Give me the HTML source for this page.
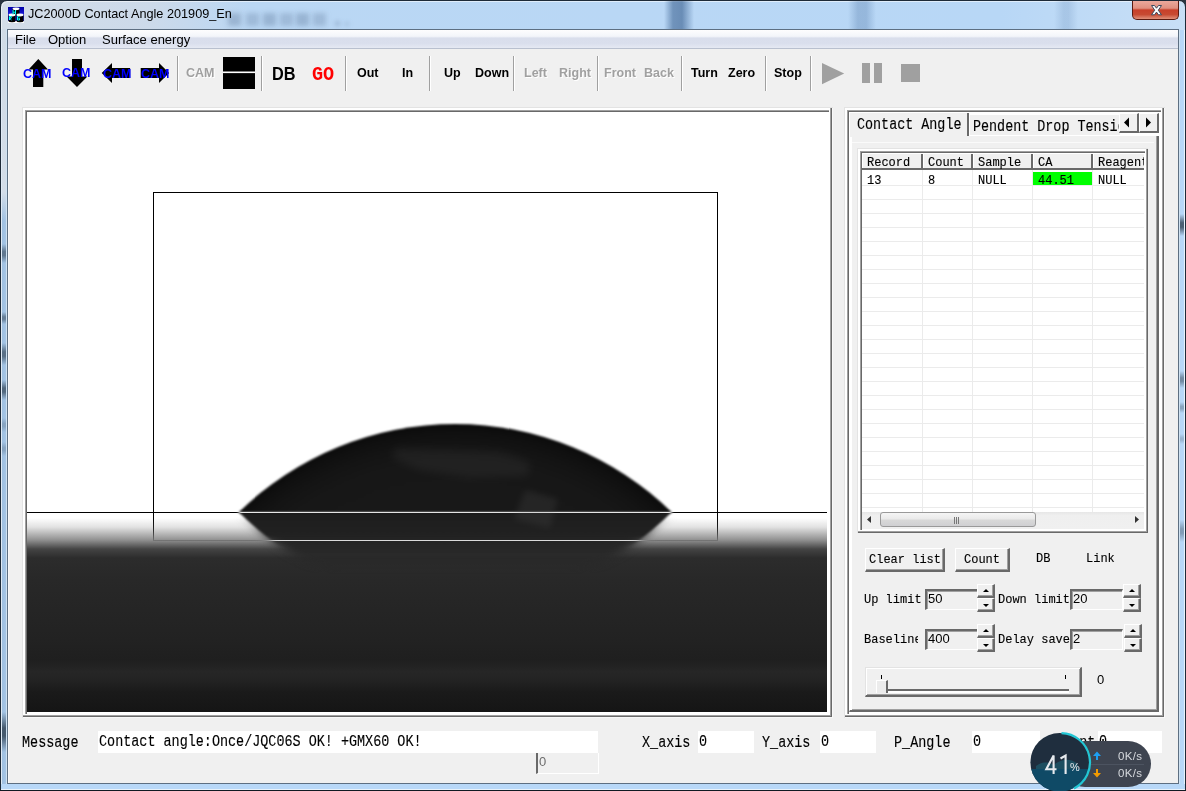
<!DOCTYPE html>
<html><head><meta charset="utf-8">
<style>
*{box-sizing:border-box;margin:0;padding:0}
html,body{width:1186px;height:791px;overflow:hidden;background:#2a3440}
.a{position:absolute}
.sans{font-family:"Liberation Sans",sans-serif}
.mono{font-family:"Liberation Mono",monospace;-webkit-text-stroke:0.12px #000}
.nw{white-space:nowrap}
#win{left:0;top:0;width:1186px;height:791px;background:linear-gradient(90deg,#d3dde8 0,#ccdaea 150px,#bad7f4 250px,#b8d7f6 1000px,#c8dff6 1186px);border:1px solid #1d2a38;border-radius:7px 7px 0 0;overflow:hidden;box-shadow:inset 1px 1px 0 rgba(255,255,255,.55)}
#client{left:7px;top:29px;width:1172px;height:755px;background:#f0f0f0;border:1px solid #5d6f82;box-shadow:inset 1px 0 0 #f8f8f8}
.tb{font:bold 12.5px "Liberation Sans",sans-serif;color:#000;top:66px;line-height:14px}
.tbd{color:#a0a0a0;text-shadow:1px 1px 0 #fff}
.sep{top:56px;width:2px;height:35px;border-left:1px solid #a0a0a0;border-right:1px solid #fff}
.frame{background:#fff;border:1px solid #e3e3e3;border-right-color:#f4f4f4;border-bottom-color:#f4f4f4}
.dk{border:2px solid #696969}
.edit{background:#f0f0f0;border-left:2px solid #696969;border-top:2px solid #696969;border-right:1px solid #fff;border-bottom:1px solid #fff;box-shadow:inset 1px 1px 0 #a0a0a0}
.etx{font-size:13px;line-height:15px;color:#000}
.spn{width:18px;height:28px}
.su,.sd{position:absolute;left:0;width:18px;height:14px;background:#f0f0f0;border-left:1px solid #fff;border-top:1px solid #fff;border-right:2px solid #696969;border-bottom:2px solid #696969;box-shadow:inset -1px -1px 0 #a0a0a0}
.su{top:0}.sd{top:14px}
.su:after,.sd:after{content:"";position:absolute;left:5px;width:0;height:0;border-left:3px solid transparent;border-right:3px solid transparent}
.su:after{top:4px;border-bottom:3px solid #000}
.sd:after{top:5px;border-top:3px solid #000}
.big{font-size:13.45px;line-height:16px;transform:scaleY(1.2);transform-origin:0 0;color:#000}
</style></head><body>
<div id="win" class="a"></div>
  <!-- title bar blurred bg -->
  <div class="a" style="left:228px;top:13px;width:13px;height:13px;background:rgba(80,105,140,0.32);filter:blur(2.5px)"></div>
  <div class="a" style="left:246px;top:13px;width:13px;height:13px;background:rgba(80,105,140,0.26);filter:blur(2.5px)"></div>
  <div class="a" style="left:263px;top:13px;width:13px;height:13px;background:rgba(80,105,140,0.32);filter:blur(2.5px)"></div>
  <div class="a" style="left:280px;top:13px;width:13px;height:13px;background:rgba(80,105,140,0.26);filter:blur(2.5px)"></div>
  <div class="a" style="left:296px;top:13px;width:13px;height:13px;background:rgba(80,105,140,0.32);filter:blur(2.5px)"></div>
  <div class="a" style="left:313px;top:13px;width:13px;height:13px;background:rgba(80,105,140,0.26);filter:blur(2.5px)"></div>
  <div class="a" style="left:335px;top:21px;width:5px;height:5px;background:rgba(80,105,140,.25);filter:blur(2px)"></div>
  <div class="a" style="left:345px;top:22px;width:4px;height:4px;background:rgba(80,105,140,.2);filter:blur(2px)"></div>
  <div class="a" style="left:664px;top:1px;width:30px;height:28px;background:linear-gradient(90deg,rgba(40,80,130,0),rgba(40,80,130,.5) 30%,rgba(40,80,130,.55) 60%,rgba(40,80,130,0))"></div>
  <div class="a" style="left:848px;top:1px;width:28px;height:28px;background:linear-gradient(90deg,rgba(70,110,160,0),rgba(70,110,160,.3) 35%,rgba(70,110,160,.3) 65%,rgba(70,110,160,0))"></div>
  <div class="a" style="left:1054px;top:1px;width:24px;height:28px;background:linear-gradient(90deg,rgba(70,110,160,0),rgba(70,110,160,.18) 40%,rgba(70,110,160,.18) 60%,rgba(70,110,160,0))"></div>
  <!-- icon -->
  <svg class="a" style="left:8px;top:7px" width="16" height="16" viewBox="0 0 16 16">
    <defs><linearGradient id="ig" x1="0" y1="0" x2="0" y2="1"><stop offset="0" stop-color="#0000a8"/><stop offset="1" stop-color="#3030ff"/></linearGradient></defs>
    <rect x="0" y="0" width="16" height="16" fill="#fff"/>
    <rect x="0" y="0" width="16" height="14" fill="url(#ig)"/>
    <rect x="4.5" y="1.5" width="7" height="7" fill="#000"/><ellipse cx="8" cy="1.8" rx="3.5" ry="1.4" fill="#fff"/>
    <rect x="0.5" y="7.5" width="7" height="6.5" fill="#000"/><ellipse cx="4" cy="8" rx="3.5" ry="1.4" fill="#fff"/><ellipse cx="4" cy="14" rx="3.5" ry="1.2" fill="#000"/>
    <rect x="8.5" y="7.5" width="7" height="6.5" fill="#000"/><ellipse cx="12" cy="8" rx="3.5" ry="1.4" fill="#fff"/><ellipse cx="12" cy="14" rx="3.5" ry="1.2" fill="#000"/>
    <path d="M5 3 L5 7.5 M7.5 3 L7.5 7.5 M5 5.2 L7.5 5.2" stroke="#00ffff" stroke-width="1"/>
    <path d="M1.5 13 L1.5 9.5 L3.2 9.5 L3.2 11.2 L1.5 11.2 L3.5 13" stroke="#00ffff" stroke-width="1" fill="none"/>
    <path d="M11.5 10 L9.5 9.5 L9.5 13 L11.5 13 L11.5 11.5 L10.5 11.5" stroke="#00ffff" stroke-width="1" fill="none"/>
  </svg>
  <div class="a sans nw" style="left:28px;top:6px;font-size:12.7px;line-height:16px;color:#000">JC2000D Contact Angle 201909_En</div>
  <!-- close button -->
  <div class="a" style="left:1132px;top:1px;width:47px;height:19px;border:1px solid #5a1a10;border-top:none;border-radius:0 0 5px 5px;background:linear-gradient(#eba89c 0%,#e09080 40%,#c8402a 50%,#c74a32 75%,#e0907a 100%)"></div>
  <svg class="a" style="left:1144px;top:3px" width="24" height="14" viewBox="0 0 24 14">
    <path d="M7.5 2.5 L10.5 2.5 L12.5 5.2 L14.5 2.5 L17.5 2.5 L14.3 7.2 L17.5 11.8 L14.5 11.8 L12.5 9.1 L10.5 11.8 L7.5 11.8 L10.7 7.2Z" fill="#fff" stroke="#3c4a5e" stroke-width="1"/>
  </svg>

<div class="a" style="left:1px;top:29px;width:6px;height:761px;background:linear-gradient(90deg,#dfeaf5 0,#dfeaf5 1px,#9ebfe0 1px,#a6c6e6 5px,#cfe2f2 5px)"></div>
<div class="a" style="left:2px;top:29px;width:4px;height:192px;background:linear-gradient(#d0dbe6 0,#d3dde8 85%,rgba(211,221,232,0))"></div>
<div class="a" style="left:1179px;top:30px;width:6px;height:760px;background:linear-gradient(90deg,#cfe2f2 0,#cfe2f2 1px,#b6d6f6 1px,#b8d8f8 5px,#e6f2fb 5px)"></div>
<div class="a" style="left:1px;top:784px;width:1184px;height:6px;background:linear-gradient(#b8d8f8 0,#b8d8f8 5px,#e8f2fb 5px)"></div>
<div class="a" style="left:0;top:790px;width:1186px;height:1px;background:#111a22"></div>
<div class="a" style="left:2px;top:244px;width:4px;height:19px;background:linear-gradient(rgba(30,45,60,0),rgba(30,45,60,0.5) 40%,rgba(30,45,60,0.5) 60%,rgba(30,45,60,0))"></div>
<div class="a" style="left:2px;top:312px;width:4px;height:12px;background:linear-gradient(rgba(30,45,60,0),rgba(30,45,60,0.45) 40%,rgba(30,45,60,0.45) 60%,rgba(30,45,60,0))"></div>
<div class="a" style="left:2px;top:343px;width:4px;height:22px;background:linear-gradient(rgba(30,45,60,0),rgba(30,45,60,0.55) 40%,rgba(30,45,60,0.55) 60%,rgba(30,45,60,0))"></div>
<div class="a" style="left:2px;top:380px;width:4px;height:20px;background:linear-gradient(rgba(30,45,60,0),rgba(30,45,60,0.6) 40%,rgba(30,45,60,0.6) 60%,rgba(30,45,60,0))"></div>
<div class="a" style="left:2px;top:418px;width:4px;height:14px;background:linear-gradient(rgba(30,45,60,0),rgba(30,45,60,0.2) 40%,rgba(30,45,60,0.2) 60%,rgba(30,45,60,0))"></div>
<div class="a" style="left:2px;top:442px;width:4px;height:14px;background:linear-gradient(rgba(30,45,60,0),rgba(30,45,60,0.2) 40%,rgba(30,45,60,0.2) 60%,rgba(30,45,60,0))"></div>
<div class="a" style="left:2px;top:712px;width:4px;height:40px;background:linear-gradient(rgba(30,45,60,0),rgba(30,45,60,0.7) 40%,rgba(30,45,60,0.7) 60%,rgba(30,45,60,0))"></div>
<div class="a" style="left:1180px;top:214px;width:4px;height:22px;background:linear-gradient(rgba(30,45,60,0),rgba(30,45,60,0.7) 40%,rgba(30,45,60,0.7) 60%,rgba(30,45,60,0))"></div>
<div class="a" style="left:1180px;top:371px;width:4px;height:17px;background:linear-gradient(rgba(30,45,60,0),rgba(30,45,60,0.45) 40%,rgba(30,45,60,0.45) 60%,rgba(30,45,60,0))"></div>
<div class="a" style="left:1180px;top:402px;width:4px;height:11px;background:linear-gradient(rgba(30,45,60,0),rgba(30,45,60,0.3) 40%,rgba(30,45,60,0.3) 60%,rgba(30,45,60,0))"></div>
<div class="a" style="left:1180px;top:434px;width:4px;height:10px;background:linear-gradient(rgba(30,45,60,0),rgba(30,45,60,0.2) 40%,rgba(30,45,60,0.2) 60%,rgba(30,45,60,0))"></div>
<div class="a" style="left:1180px;top:520px;width:4px;height:22px;background:linear-gradient(rgba(30,45,60,0),rgba(30,45,60,0.35) 40%,rgba(30,45,60,0.35) 60%,rgba(30,45,60,0))"></div>
<div id="client" class="a"></div>
<!-- menu bar -->
<div class="a" style="left:8px;top:30px;width:1170px;height:19px;background:linear-gradient(#fdfdfe 0%,#f3f5fa 35%,#d9deec 45%,#dadfed 75%,#e5e9f3 100%);border-bottom:1px solid #b9c0cf"></div>
<div class="a sans nw" style="left:15px;top:32px;font-size:13px;line-height:16px;color:#000">File</div>
<div class="a sans nw" style="left:48px;top:32px;font-size:13px;line-height:16px;color:#000">Option</div>
<div class="a sans nw" style="left:102px;top:32px;font-size:13px;line-height:16px;color:#000">Surface energy</div>

<!-- toolbar arrows -->
<svg class="a" style="left:0;top:50px" width="940" height="45" viewBox="0 50 940 45">
  <!-- up -->
  <path d="M38.3 59 L48 69.4 L43.3 69.4 L43.3 87 L33 87 L33 69.4 L28.6 69.4Z" fill="#000"/>
  <!-- down -->
  <path d="M72 59 L82 59 L82 76.5 L87.4 76.5 L77 87 L66.6 76.5 L72 76.5Z" fill="#000"/>
  <!-- left -->
  <path d="M101.7 73 L112 63 L112 68 L130.1 68 L130.1 78 L112 78 L112 83Z" fill="#000"/>
  <!-- right -->
  <path d="M140.7 68 L159 68 L159 63 L169.1 73 L159 83 L159 78 L140.7 78Z" fill="#000"/>
  <!-- black box -->
  <rect x="223" y="57" width="32" height="32" fill="#000"/>
  <rect x="223" y="71.5" width="32" height="1.6" fill="#fff"/>
  <!-- play pause stop -->
  <path d="M822 63 L844.2 73.6 L822 84.2Z" fill="#a0a0a0"/>
  <rect x="862" y="63" width="8" height="20" fill="#a0a0a0"/>
  <rect x="874" y="63" width="8" height="20" fill="#a0a0a0"/>
  <rect x="901" y="64" width="19" height="18" fill="#a0a0a0"/>
</svg>
<div class="a tb nw" style="left:23px;top:67px;color:#0000ff">CAM</div>
<div class="a tb nw" style="left:62px;top:66px;color:#0000ff">CAM</div>
<div class="a tb nw" style="left:103px;top:67px;color:#0000ff">CAM</div>
<div class="a tb nw" style="left:141px;top:67px;color:#0000ff">CAM</div>
<div class="a sep" style="left:177px"></div>
<div class="a tb tbd nw" style="left:186px;top:66px">CAM</div>
<div class="a sep" style="left:261px"></div>
<div class="a nw sans" style="left:272px;top:63px;font:bold 16.3px 'Liberation Sans';line-height:18px;color:#000;transform:scaleY(1.1);transform-origin:0 0">DB</div>
<div class="a nw" style="left:312px;top:66px;font:bold 18.5px 'Liberation Mono';line-height:18px;color:#f00;transform:scaleY(1.08);transform-origin:0 0">GO</div>
<div class="a sep" style="left:345px"></div>
<div class="a tb nw" style="left:357px">Out</div>
<div class="a tb nw" style="left:402px">In</div>
<div class="a sep" style="left:429px"></div>
<div class="a tb nw" style="left:444px">Up</div>
<div class="a tb nw" style="left:475px">Down</div>
<div class="a sep" style="left:513px"></div>
<div class="a tb tbd nw" style="left:524px">Left</div>
<div class="a tb tbd nw" style="left:559px">Right</div>
<div class="a sep" style="left:597px"></div>
<div class="a tb tbd nw" style="left:604px">Front</div>
<div class="a tb tbd nw" style="left:644px">Back</div>
<div class="a sep" style="left:681px"></div>
<div class="a tb nw" style="left:691px">Turn</div>
<div class="a tb nw" style="left:728px">Zero</div>
<div class="a sep" style="left:765px"></div>
<div class="a tb nw" style="left:774px">Stop</div>
<div class="a sep" style="left:810px"></div>

<!-- image frame -->
<div class="a" style="left:22px;top:107px;width:811px;height:611px;background:#f8f8f8;border-left:1px solid #e3e3e3;border-top:1px solid #e3e3e3"></div>
<div class="a" style="left:23px;top:108px;width:809px;height:609px;background:#696969"></div>
<div class="a" style="left:23px;top:108px;width:808px;height:608px;background:#a0a0a0"></div>
<div class="a" style="left:23px;top:108px;width:807px;height:607px;background:#fff"></div>
<div class="a" style="left:25px;top:110px;width:804px;height:604px;border-left:1px solid #a0a0a0;border-top:1px solid #a0a0a0;box-shadow:inset 1px 1px 0 #696969;background:#fff"></div>
<svg class="a" style="left:27px;top:112px" width="800" height="600" viewBox="27 112 800 600">
  <defs>
    <linearGradient id="sub" x1="0" y1="512" x2="0" y2="712" gradientUnits="userSpaceOnUse">
      <stop offset="0" stop-color="#fff"/>
      <stop offset="0.03" stop-color="#fff"/>
      <stop offset="0.075" stop-color="#e2e2e2"/>
      <stop offset="0.14" stop-color="#909090"/>
      <stop offset="0.185" stop-color="#444"/>
      <stop offset="0.23" stop-color="#2c2c2c"/>
      <stop offset="0.34" stop-color="#282828"/>
      <stop offset="0.64" stop-color="#222"/>
      <stop offset="0.74" stop-color="#1f1f1f"/>
      <stop offset="0.8" stop-color="#262626"/>
      <stop offset="0.84" stop-color="#232323"/>
      <stop offset="0.9" stop-color="#1a1a1a"/>
      <stop offset="1" stop-color="#151515"/>
    </linearGradient>
    <linearGradient id="refg" x1="0" y1="512" x2="0" y2="580" gradientUnits="userSpaceOnUse">
      <stop offset="0" stop-color="#1d1d1d"/>
      <stop offset="0.4" stop-color="#222"/>
      <stop offset="1" stop-color="#282828"/>
    </linearGradient>
    <filter color-interpolation-filters="sRGB" id="bl1" x="-10%" y="-10%" width="120%" height="120%"><feGaussianBlur stdDeviation="0.8"/></filter>
    <filter color-interpolation-filters="sRGB" id="bl2" x="-10%" y="-10%" width="120%" height="120%"><feGaussianBlur stdDeviation="2"/></filter>
    <filter color-interpolation-filters="sRGB" id="bl4" x="-20%" y="-50%" width="140%" height="200%"><feGaussianBlur stdDeviation="4"/></filter>
    <filter color-interpolation-filters="sRGB" id="bl6" x="-20%" y="-50%" width="140%" height="200%"><feGaussianBlur stdDeviation="6"/></filter>
    <filter color-interpolation-filters="sRGB" id="bl3" x="-20%" y="-50%" width="140%" height="200%"><feGaussianBlur stdDeviation="3"/></filter>
    <radialGradient id="dropg" cx="455.25" cy="733.2" r="309.7" gradientUnits="userSpaceOnUse">
      <stop offset="0" stop-color="#1a1a1a"/>
      <stop offset="0.8" stop-color="#181818"/>
      <stop offset="0.88" stop-color="#171717"/>
      <stop offset="0.93" stop-color="#141414"/>
      <stop offset="0.97" stop-color="#101010"/>
      <stop offset="1" stop-color="#0b0b0b"/>
    </radialGradient>
    <linearGradient id="gs" x1="0" y1="512" x2="0" y2="600" gradientUnits="userSpaceOnUse">
      <stop offset="0" stop-color="#fff"/><stop offset="0.26" stop-color="#fff"/><stop offset="0.42" stop-color="#000"/><stop offset="1" stop-color="#000"/>
    </linearGradient>
    <linearGradient id="gb" x1="0" y1="512" x2="0" y2="600" gradientUnits="userSpaceOnUse">
      <stop offset="0" stop-color="#000"/><stop offset="0.05" stop-color="#000"/><stop offset="0.28" stop-color="#fff"/><stop offset="0.45" stop-color="#fff"/><stop offset="0.7" stop-color="#000"/><stop offset="1" stop-color="#000"/>
    </linearGradient>
    <mask id="msharp" maskUnits="userSpaceOnUse" x="27" y="512" width="800" height="200"><rect x="27" y="512" width="800" height="100" fill="url(#gs)"/></mask>
    <mask id="mblur" maskUnits="userSpaceOnUse" x="27" y="512" width="800" height="200"><rect x="27" y="512" width="800" height="100" fill="url(#gb)"/></mask>
  </defs>
  <rect x="27" y="112" width="800" height="600" fill="#fff"/>
  <rect x="27" y="512" width="800" height="200" fill="url(#sub)"/>
  <!-- reflection -->
  <g mask="url(#mblur)"><circle cx="455.25" cy="290.8" r="309.7" fill="#282828" filter="url(#bl4)"/></g>
  <g mask="url(#msharp)"><circle cx="455.25" cy="290.8" r="309.7" fill="url(#refg)" filter="url(#bl1)"/></g>
  <!-- cap -->
  <clipPath id="capc"><path d="M238.5 512.5 A309.7 309.7 0 0 1 672 512.5Z"/></clipPath>
  <path d="M238.5 512.5 A309.7 309.7 0 0 1 672 512.5Z" fill="url(#dropg)" filter="url(#bl1)"/>
  <g filter="url(#bl4)" opacity="0.3">
    <path d="M395 448 L500 452 L530 462 L528 476 L470 478 L420 470 L392 458Z" fill="#3a3a3a"/>
  </g>
  <g filter="url(#bl3)" opacity="0.3">
    <path d="M525 490 L558 499 L550 528 L514 519Z" fill="#444"/>
  </g>
  <!-- xor lines -->
  <g style="mix-blend-mode:difference" fill="#fff">
    <rect x="27" y="512" width="800" height="1"/>
    <rect x="153" y="192" width="565" height="1"/>
    <rect x="153" y="540" width="565" height="1"/>
    <rect x="153" y="193" width="1" height="347"/>
    <rect x="717" y="193" width="1" height="347"/>
  </g>
</svg>

<!-- right group frame -->
<div class="a" style="left:844px;top:107px;width:321px;height:611px;background:#f8f8f8;border-left:1px solid #e3e3e3;border-top:1px solid #e3e3e3"></div>
<div class="a" style="left:845px;top:108px;width:319px;height:609px;background:#696969"></div>
<div class="a" style="left:845px;top:108px;width:318px;height:608px;background:#a0a0a0"></div>
<div class="a" style="left:845px;top:108px;width:317px;height:607px;background:#fff"></div>
<div class="a" style="left:847px;top:110px;width:314px;height:604px;border-left:1px solid #a0a0a0;border-top:1px solid #a0a0a0;box-shadow:inset 1px 1px 0 #696969;background:#fff"></div>
<!-- tab page -->
<div class="a" style="left:849px;top:135px;width:310px;height:577px;background:#f0f0f0;border-left:1px solid #fff;border-top:1px solid #fff;border-right:2px solid #696969;border-bottom:2px solid #696969;box-shadow:inset -1px -1px 0 #a0a0a0"></div>
<div class="a" style="left:850px;top:136px;width:2px;height:574px;background:#fff"></div>
<!-- selected tab -->
<div class="a" style="left:849px;top:112px;width:119px;height:25px;background:#f0f0f0;border-left:1px solid #fff;border-top:1px solid #fff"></div>
<div class="a" style="left:967px;top:113px;width:2px;height:23px;background:#696969"></div>
<div class="a mono nw" style="left:857px;top:116px;font-size:13.4px;line-height:16px;transform:scaleY(1.2);transform-origin:0 0;color:#000">Contact Angle</div>
<!-- other tab -->
<div class="a" style="left:969px;top:114px;width:151px;height:22px;background:#f0f0f0;border-left:1px solid #fff;border-top:1px solid #fff;overflow:hidden">
  <div class="a mono nw" style="left:3px;top:3px;font-size:13.4px;line-height:16px;transform:scaleY(1.2);transform-origin:0 0;color:#000">Pendent Drop Tension</div>
</div>
<div class="a" style="left:969px;top:135px;width:190px;height:1px;background:#fff"></div>
<!-- scroll btns -->
<div class="a" style="left:1119px;top:113px;width:20px;height:20px;background:#f0f0f0;border-left:1px solid #fff;border-top:1px solid #fff;border-right:2px solid #696969;border-bottom:2px solid #696969"></div>
<div class="a" style="left:1139px;top:113px;width:20px;height:20px;background:#f0f0f0;border-left:1px solid #fff;border-top:1px solid #fff;border-right:2px solid #696969;border-bottom:2px solid #696969"></div>
<svg class="a" style="left:1119px;top:113px" width="40" height="20" viewBox="0 0 40 20">
  <path d="M5 9.5 L10 4.5 L10 14.5Z" fill="#000"/>
  <path d="M27 4.5 L32 9.5 L27 14.5Z" fill="#000"/>
</svg>
<!-- inner frame highlight line -->
<div class="a" style="left:852px;top:142px;width:302px;height:1px;background:#fafafa"></div>
<!-- grid frame -->
<div class="a" style="left:857px;top:148px;width:291px;height:385px;background:#696969;border-left:1px solid #e3e3e3;border-top:1px solid #e3e3e3"></div>
<div class="a" style="left:858px;top:149px;width:290px;height:384px;background:#696969"></div>
<div class="a" style="left:858px;top:149px;width:289px;height:383px;background:#a0a0a0"></div>
<div class="a" style="left:858px;top:149px;width:288px;height:382px;background:#fff"></div>
<div class="a" style="left:860px;top:151px;width:285px;height:379px;border-left:1px solid #a0a0a0;border-top:1px solid #a0a0a0;box-shadow:inset 1px 1px 0 #696969;background:#fff"></div>
<!-- grid content -->
<div class="a" style="left:862px;top:153px;width:282px;height:359px;overflow:hidden;background:#fff">
  <svg class="a" style="left:0;top:0" width="282" height="359" viewBox="862 153 282 359">
    <g fill="#ebebeb">
      <rect x="862" y="185" width="282" height="1"/><rect x="862" y="199" width="282" height="1"/><rect x="862" y="213" width="282" height="1"/><rect x="862" y="227" width="282" height="1"/><rect x="862" y="241" width="282" height="1"/><rect x="862" y="255" width="282" height="1"/><rect x="862" y="269" width="282" height="1"/><rect x="862" y="283" width="282" height="1"/><rect x="862" y="297" width="282" height="1"/><rect x="862" y="311" width="282" height="1"/><rect x="862" y="325" width="282" height="1"/><rect x="862" y="339" width="282" height="1"/><rect x="862" y="353" width="282" height="1"/><rect x="862" y="367" width="282" height="1"/><rect x="862" y="381" width="282" height="1"/><rect x="862" y="395" width="282" height="1"/><rect x="862" y="409" width="282" height="1"/><rect x="862" y="423" width="282" height="1"/><rect x="862" y="437" width="282" height="1"/><rect x="862" y="451" width="282" height="1"/><rect x="862" y="465" width="282" height="1"/><rect x="862" y="479" width="282" height="1"/><rect x="862" y="493" width="282" height="1"/><rect x="862" y="507" width="282" height="1"/>
      <rect x="922" y="170" width="1" height="342"/><rect x="972" y="170" width="1" height="342"/><rect x="1032" y="170" width="1" height="342"/><rect x="1092" y="170" width="1" height="342"/>
    </g>
    <!-- header -->
    <rect x="862" y="153" width="282" height="17" fill="#f0f0f0"/>
    <g fill="#696969">
      <rect x="862" y="168" width="282" height="2"/>
      <rect x="921" y="153" width="2" height="17"/><rect x="971" y="153" width="2" height="17"/><rect x="1031" y="153" width="2" height="17"/><rect x="1091" y="153" width="2" height="17"/>
    </g>
    <g fill="#fff">
      <rect x="862" y="153" width="282" height="1"/>
      <rect x="862" y="153" width="1" height="15"/><rect x="923" y="153" width="1" height="15"/><rect x="973" y="153" width="1" height="15"/><rect x="1033" y="153" width="1" height="15"/><rect x="1093" y="153" width="1" height="15"/>
    </g>
    <rect x="1033" y="172" width="59" height="13" fill="#00ff00"/>
  </svg>
  <div class="a mono nw" style="left:5px;top:2px;font-size:12px;line-height:14px;transform:scaleY(1.12);transform-origin:0 0;color:#000">Record</div>
  <div class="a mono nw" style="left:66px;top:2px;font-size:12px;line-height:14px;transform:scaleY(1.12);transform-origin:0 0;color:#000">Count</div>
  <div class="a mono nw" style="left:116px;top:2px;font-size:12px;line-height:14px;transform:scaleY(1.12);transform-origin:0 0;color:#000">Sample</div>
  <div class="a mono nw" style="left:176px;top:2px;font-size:12px;line-height:14px;transform:scaleY(1.12);transform-origin:0 0;color:#000">CA</div>
  <div class="a mono nw" style="left:236px;top:2px;font-size:12px;line-height:14px;transform:scaleY(1.12);transform-origin:0 0;color:#000">Reagent</div>
  <div class="a mono nw" style="left:5px;top:20px;font-size:12px;line-height:14px;transform:scaleY(1.12);transform-origin:0 0;color:#000">13</div>
  <div class="a mono nw" style="left:66px;top:20px;font-size:12px;line-height:14px;transform:scaleY(1.12);transform-origin:0 0;color:#000">8</div>
  <div class="a mono nw" style="left:116px;top:20px;font-size:12px;line-height:14px;transform:scaleY(1.12);transform-origin:0 0;color:#000">NULL</div>
  <div class="a mono nw" style="left:176px;top:20px;font-size:12px;line-height:14px;transform:scaleY(1.12);transform-origin:0 0;color:#000">44.51</div>
  <div class="a mono nw" style="left:236px;top:20px;font-size:12px;line-height:14px;transform:scaleY(1.12);transform-origin:0 0;color:#000">NULL</div>
</div>
<!-- h scrollbar -->
<div class="a" style="left:862px;top:512px;width:282px;height:17px;background:linear-gradient(#e6e6e6,#efefef 20%,#f0f0f0)"></div>
<div class="a" style="left:880px;top:512px;width:156px;height:15px;border:1px solid #999;border-radius:3px;background:linear-gradient(#f5f5f5 0%,#eaeaea 45%,#d8d8d8 55%,#cfcfd2 100%)"></div>
<svg class="a" style="left:862px;top:512px" width="282" height="17" viewBox="0 0 282 17">
  <path d="M5 7.5 L9 4 L9 11Z" fill="#333"/>
  <path d="M273 4 L277 7.5 L273 11Z" fill="#333"/>
  <g fill="#777"><rect x="92" y="5" width="1" height="7"/><rect x="94" y="5" width="1" height="7"/><rect x="96" y="5" width="1" height="7"/></g>
</svg>
<div class="a" style="left:862px;top:529px;width:284px;height:2px;background:#fff"></div>
<div class="a" style="left:1144px;top:153px;width:2px;height:378px;background:#fff"></div>

<!-- buttons -->
<div class="a" style="left:865px;top:548px;width:80px;height:24px;background:#f0f0f0;border-left:1px solid #fff;border-top:1px solid #fff;border-right:2px solid #696969;border-bottom:2px solid #696969;box-shadow:inset -1px -1px 0 #a0a0a0"></div>
<div class="a mono nw" style="left:869px;top:552px;font-size:12px;line-height:14px;transform:scaleY(1.12);transform-origin:0 0">Clear list</div>
<div class="a" style="left:955px;top:548px;width:55px;height:24px;background:#f0f0f0;border-left:1px solid #fff;border-top:1px solid #fff;border-right:2px solid #696969;border-bottom:2px solid #696969;box-shadow:inset -1px -1px 0 #a0a0a0"></div>
<div class="a mono nw" style="left:964px;top:552px;font-size:12px;line-height:14px;transform:scaleY(1.12);transform-origin:0 0">Count</div>
<div class="a mono nw" style="left:1036px;top:551px;font-size:12px;line-height:14px;transform:scaleY(1.12);transform-origin:0 0">DB</div>
<div class="a mono nw" style="left:1086px;top:551px;font-size:12px;line-height:14px;transform:scaleY(1.12);transform-origin:0 0">Link</div>
<!-- limits -->
<div class="a mono nw" style="left:864px;top:592px;font-size:12px;line-height:14px;transform:scaleY(1.12);transform-origin:0 0">Up limit</div>
<div class="a mono nw" style="left:998px;top:592px;font-size:12px;line-height:14px;transform:scaleY(1.12);transform-origin:0 0">Down limit</div>
<div class="a" style="left:864px;top:632px;width:54px;height:16px;overflow:hidden"><div class="a mono nw" style="left:0;top:0;font-size:12px;line-height:14px;transform:scaleY(1.12);transform-origin:0 0">Baseline</div></div>
<div class="a mono nw" style="left:998px;top:632px;font-size:12px;line-height:14px;transform:scaleY(1.12);transform-origin:0 0">Delay save</div>
<!-- edits -->
<div class="a edit" style="left:925px;top:589px;width:53px;height:21px"></div>
<div class="a edit" style="left:1070px;top:589px;width:53px;height:21px"></div>
<div class="a edit" style="left:925px;top:629px;width:53px;height:21px"></div>
<div class="a edit" style="left:1070px;top:629px;width:53px;height:21px"></div>
<div class="a sans nw etx" style="left:928px;top:591px">50</div>
<div class="a sans nw etx" style="left:1073px;top:591px">20</div>
<div class="a sans nw etx" style="left:928px;top:631px">400</div>
<div class="a sans nw etx" style="left:1073px;top:631px">2</div>
<!-- spinners -->
<div class="a spn" style="left:977px;top:584px"><div class="su"></div><div class="sd"></div></div>
<div class="a spn" style="left:1123px;top:584px"><div class="su"></div><div class="sd"></div></div>
<div class="a spn" style="left:977px;top:624px"><div class="su"></div><div class="sd"></div></div>
<div class="a spn" style="left:1124px;top:624px"><div class="su"></div><div class="sd"></div></div>
<!-- slider -->
<div class="a" style="left:865px;top:667px;width:217px;height:30px;background:#f0f0f0;border:1px solid #e3e3e3;border-right:2px solid #696969;border-bottom:2px solid #696969;box-shadow:inset 1px 1px 0 #fff, inset -1px -1px 0 #a0a0a0"></div>
<div class="a" style="left:881px;top:675px;width:1px;height:4px;background:#000"></div>
<div class="a" style="left:1065px;top:675px;width:1px;height:4px;background:#000"></div>
<div class="a" style="left:887px;top:689px;width:182px;height:2px;background:#696969"></div>
<div class="a" style="left:887px;top:691px;width:182px;height:2px;background:#fff"></div>
<div class="a" style="left:876px;top:680px;width:12px;height:13px;background:#ececec;border-left:1px solid #fff;border-top:1px solid #fff;border-right:2px solid #696969"></div>
<div class="a sans nw" style="left:1097px;top:673px;font-size:13px;line-height:14px">0</div>

<!-- status bar -->
<div class="a mono nw big" style="left:22px;top:734px">Message</div>
<div class="a" style="left:98px;top:731px;width:500px;height:22px;background:#fff"></div>
<div class="a mono nw big" style="left:99px;top:733px">Contact angle:Once/JQC06S OK! +GMX60 OK!</div>
<div class="a" style="left:536px;top:753px;width:63px;height:21px;background:#f0f0f0;border-left:2px solid #696969;border-right:1px solid #fff;border-bottom:1px solid #fff"></div>
<div class="a sans nw" style="left:539px;top:755px;font-size:13px;line-height:14px;color:#6d6d6d">0</div>
<div class="a mono nw big" style="left:642px;top:734px">X_axis</div>
<div class="a" style="left:698px;top:731px;width:56px;height:22px;background:#fff"></div>
<div class="a mono nw big" style="left:699px;top:733px">0</div>
<div class="a mono nw big" style="left:762px;top:734px">Y_axis</div>
<div class="a" style="left:820px;top:731px;width:56px;height:22px;background:#fff"></div>
<div class="a mono nw big" style="left:821px;top:733px">0</div>
<div class="a mono nw big" style="left:894px;top:734px">P_Angle</div>
<div class="a" style="left:972px;top:731px;width:68px;height:22px;background:#fff"></div>
<div class="a mono nw big" style="left:973px;top:733px">0</div>
<div class="a mono nw big" style="left:1055px;top:734px">Count</div>
<div class="a" style="left:1098px;top:731px;width:64px;height:22px;background:#fff"></div>
<div class="a mono nw big" style="left:1099px;top:733px">0</div>

<!-- floating ball -->
<div class="a" style="left:1062px;top:741px;width:89px;height:46px;border-radius:23px;background:#3e4450"></div>
<div class="a" style="left:1090px;top:764px;width:54px;height:1px;background:#4c5360"></div>
<svg class="a" style="left:1028px;top:731px" width="64" height="60" viewBox="0 0 64 60">
  <defs><clipPath id="cc"><circle cx="31.7" cy="31.3" r="29.3"/></clipPath></defs>
  <circle cx="31.7" cy="31.3" r="29.3" fill="#1f2e3e"/>
  <g clip-path="url(#cc)">
    <path d="M0 38 L64 38 L64 64 L0 64Z" fill="#0f4a66"/>
    <path d="M8 35 C14 30 22 31 26 34 C32 28 44 26 50 34 L50 38 L8 38Z" fill="#1d4e60"/>
  </g>
  <path d="M33.5 2.1 A29.3 29.3 0 0 1 46 57.5" fill="none" stroke="#22c6d4" stroke-width="2.2"/>
</svg>
<svg class="a" style="left:1040px;top:750px" width="32" height="30" viewBox="1040 750 32 30">
  <path d="M1053.6 774 L1053.6 755.5 L1046.3 769.2 L1056.5 769.2" stroke="#e6eaee" stroke-width="2.1" fill="none" stroke-linejoin="miter"/>
  <path d="M1060.5 758.5 L1065.6 755.5 L1065.6 774" stroke="#e6eaee" stroke-width="2.1" fill="none"/>
</svg>
<div class="a sans nw" style="left:1070px;top:761px;font-size:11px;line-height:12px;color:#e6eaee">%</div>
<svg class="a" style="left:1092px;top:750px" width="12" height="30" viewBox="0 0 12 30">
  <path d="M5 1.5 L9 6 L6 6 L6 10 L4 10 L4 6 L1 6Z" fill="#1e9ff2"/>
  <path d="M4 19 L6 19 L6 23 L9 23 L5 27.5 L1 23 L4 23Z" fill="#f39a00"/>
</svg>
<div class="a sans nw" style="left:1118px;top:750px;font-size:11.5px;line-height:12px;color:#d6d9de;letter-spacing:0.3px">0K/s</div>
<div class="a sans nw" style="left:1118px;top:767px;font-size:11.5px;line-height:12px;color:#d6d9de;letter-spacing:0.3px">0K/s</div>

<!--CLIENT-->
</body></html>
